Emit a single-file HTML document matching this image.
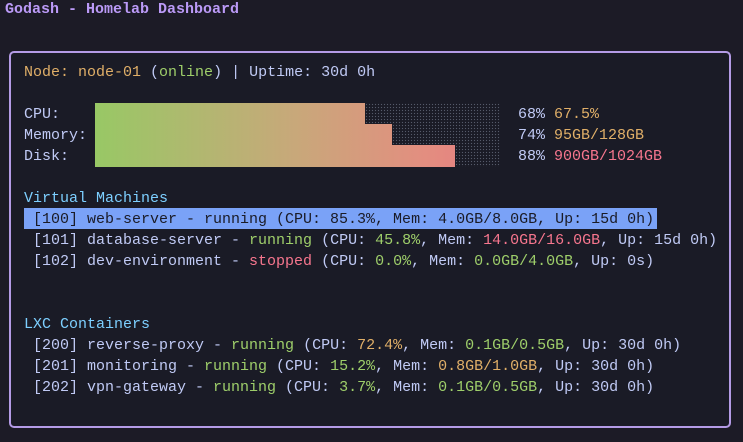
<!DOCTYPE html>
<html><head><style>
body{margin:0;width:743px;height:442px;background:#1c1b26;overflow:hidden;position:relative;font-family:"Liberation Mono",monospace;font-size:15px;color:#c0caf5}
.t{position:absolute;white-space:pre;line-height:21px}
.box{position:absolute;left:9px;top:51px;width:718px;height:373px;border:2px solid #b49be6;border-radius:5px;background:#1a1b26}
.g{color:#9ece6a}.o{color:#e0af68}.r{color:#f7768e}.b{color:#7dcfff}.w{color:#c0caf5}
.dots{position:absolute;background-image:radial-gradient(#555a6a 0.7px,transparent 0.8px);background-size:3px 3px}
.bar{position:absolute;left:95px;height:21px;background:linear-gradient(90deg,#98c865 0px,#c8a87a 200px,#e38e80 330px,#e67a82 405px);background-size:405px 21px}
</style></head><body>
<div class="t" style="left:5px;top:-1px;color:#bb9af7;font-weight:bold">Godash - Homelab Dashboard</div>
<div class="box"></div>
<div class="t o" style="left:24px;top:62px">Node: node-01 <span class="w">(</span><span class="g">online</span><span class="w">) | Uptime: 30d 0h</span></div>
<div class="t" style="left:24px;top:104px">CPU:
Memory:
Disk:</div>
<div class="dots" style="left:95px;top:103px;width:405px;height:64px"></div>
<div class="bar" style="top:103px;width:270px"></div>
<div class="bar" style="top:124px;width:297px"></div>
<div class="bar" style="top:145px;width:360px;height:22px"></div>
<div class="t" style="left:518px;top:104px">68% <span class="o">67.5%</span>
74% <span class="o">95GB/128GB</span>
88% <span class="r">900GB/1024GB</span></div>
<div class="t b" style="left:24px;top:188px">Virtual Machines</div>
<div style="position:absolute;left:24px;top:208px;width:633px;height:21px;background:#7aa2f7"></div>
<div class="t" style="left:24px;top:209px"><span style="color:#1a1b26"> [100] web-server - running (CPU: 85.3%, Mem: 4.0GB/8.0GB, Up: 15d 0h)</span>
 [101] database-server - <span class="g">running</span> (CPU: <span class="g">45.8%</span>, Mem: <span class="r">14.0GB/16.0GB</span>, Up: 15d 0h)
 [102] dev-environment - <span class="r">stopped</span> (CPU: <span class="g">0.0%</span>, Mem: <span class="g">0.0GB/4.0GB</span>, Up: 0s)</div>
<div class="t b" style="left:24px;top:314px">LXC Containers</div>
<div class="t" style="left:24px;top:335px"> [200] reverse-proxy - <span class="g">running</span> (CPU: <span class="o">72.4%</span>, Mem: <span class="g">0.1GB/0.5GB</span>, Up: 30d 0h)
 [201] monitoring - <span class="g">running</span> (CPU: <span class="g">15.2%</span>, Mem: <span class="o">0.8GB/1.0GB</span>, Up: 30d 0h)
 [202] vpn-gateway - <span class="g">running</span> (CPU: <span class="g">3.7%</span>, Mem: <span class="g">0.1GB/0.5GB</span>, Up: 30d 0h)</div>
</body></html>
